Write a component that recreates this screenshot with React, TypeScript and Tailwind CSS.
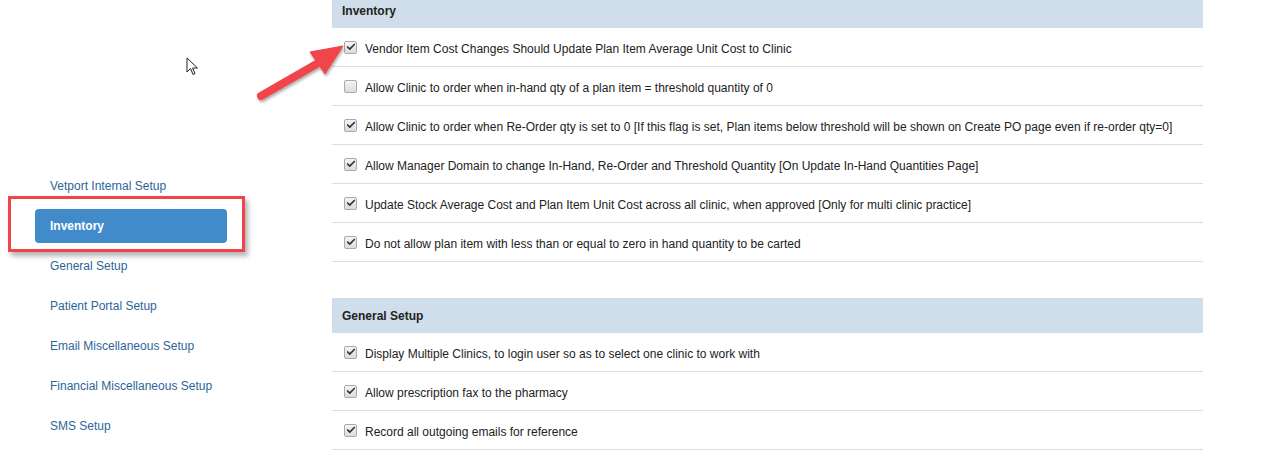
import { Check } from "lucide-react";

const NAV = [
  "Vetport Internal Setup",
  "Inventory",
  "General Setup",
  "Patient Portal Setup",
  "Email Miscellaneous Setup",
  "Financial Miscellaneous Setup",
  "SMS Setup",
];

const INVENTORY = [
  { label: "Vendor Item Cost Changes Should Update Plan Item Average Unit Cost to Clinic", on: true },
  { label: "Allow Clinic to order when in-hand qty of a plan item = threshold quantity of 0", on: false },
  {
    label:
      "Allow Clinic to order when Re-Order qty is set to 0 [If this flag is set, Plan items below threshold will be shown on Create PO page even if re-order qty=0]",
    on: true,
  },
  { label: "Allow Manager Domain to change In-Hand, Re-Order and Threshold Quantity [On Update In-Hand Quantities Page]", on: true },
  { label: "Update Stock Average Cost and Plan Item Unit Cost across all clinic, when approved [Only for multi clinic practice]", on: true },
  { label: "Do not allow plan item with less than or equal to zero in hand quantity to be carted", on: true },
];

const GENERAL = [
  { label: "Display Multiple Clinics, to login user so as to select one clinic to work with", on: true },
  { label: "Allow prescription fax to the pharmacy", on: true },
  { label: "Record all outgoing emails for reference", on: true },
];

function Box({ on }: { on: boolean }) {
  return (
    <span className="-mt-[4px] flex h-[13px] w-[13px] shrink-0 items-center justify-center rounded-[2px] border border-[#a9a9a9] bg-gradient-to-b from-[#f4f4f4] to-[#dcdcdc]">
      {on && <Check className="h-[10px] w-[10px] text-[#333]" strokeWidth={4} />}
    </span>
  );
}

function Section({ title, rows, className = "" }: { title: string; rows: { label: string; on: boolean }[]; className?: string }) {
  return (
    <div className={className}>
      <div className="flex h-[35px] items-center bg-[#cfdeea] px-[10px] text-[12px] font-bold text-[#222]">{title}</div>
      {rows.map((r, i) => (
        <div key={i} className="flex h-[39px] items-center gap-[8px] border-b border-[#dddddd] pl-[12px] pt-[4px] text-[12px] text-[#222]">
          <Box on={r.on} />
          <span>{r.label}</span>
        </div>
      ))}
    </div>
  );
}

export default function App() {
  return (
    <div className="relative h-[453px] w-[1264px] overflow-hidden bg-white" style={{ fontFamily: '"Liberation Sans", Arial, sans-serif' }}>
      <div className="flex">
        {/* sidebar */}
        <div className="w-[332px] shrink-0 pt-[165px]">
          <nav className="ml-[35px] w-[192px]">
            {NAV.map((n) => (
              <div key={n} className="flex h-[40px] items-center pt-[2px]">
                {n === "Inventory" ? (
                  <div className="flex h-[34px] w-full items-center rounded-[4px] bg-[#428bca] pl-[15px] text-[12px] font-bold text-white">
                    {n}
                  </div>
                ) : (
                  <span className="pl-[15px] text-[12px] text-[#2c6599]">{n}</span>
                )}
              </div>
            ))}
          </nav>
        </div>

        {/* settings */}
        <div className="-mt-[7px] w-[871px]">
          <Section title="Inventory" rows={INVENTORY} />
          <Section title="General Setup" rows={GENERAL} className="mt-[36px]" />
        </div>
      </div>

      {/* highlight box */}
      <div className="absolute left-[8px] top-[196px] h-[56px] w-[237px] border-[3px] border-[#f2434a] shadow-[3px_4px_5px_rgba(0,0,0,0.3)]" />

      {/* arrow */}
      <svg className="absolute left-[250px] top-[38px]" width="100" height="70" viewBox="0 0 100 70">
        <defs>
          <filter id="sh" x="-20%" y="-20%" width="150%" height="150%">
            <feDropShadow dx="1" dy="2" stdDeviation="1.5" floodColor="#000" floodOpacity="0.35" />
          </filter>
        </defs>
        <g filter="url(#sh)" fill="#f0444b" stroke="#f0444b">
          <line x1="11" y1="58" x2="70" y2="24" strokeWidth="8" strokeLinecap="round" />
          <polygon points="93,8 60,14 75,36" strokeWidth="1" strokeLinejoin="round" />
        </g>
      </svg>

      {/* mouse cursor */}
      <svg className="absolute left-[186px] top-[57px]" width="14" height="20" viewBox="0 0 14 20">
        <path d="M1 1 L1 15 L4.5 11.5 L7 17.5 L9 16.6 L6.6 11 L11.5 11 Z" fill="#fff" stroke="#222" strokeWidth="1" strokeLinejoin="round" />
      </svg>
    </div>
  );
}
